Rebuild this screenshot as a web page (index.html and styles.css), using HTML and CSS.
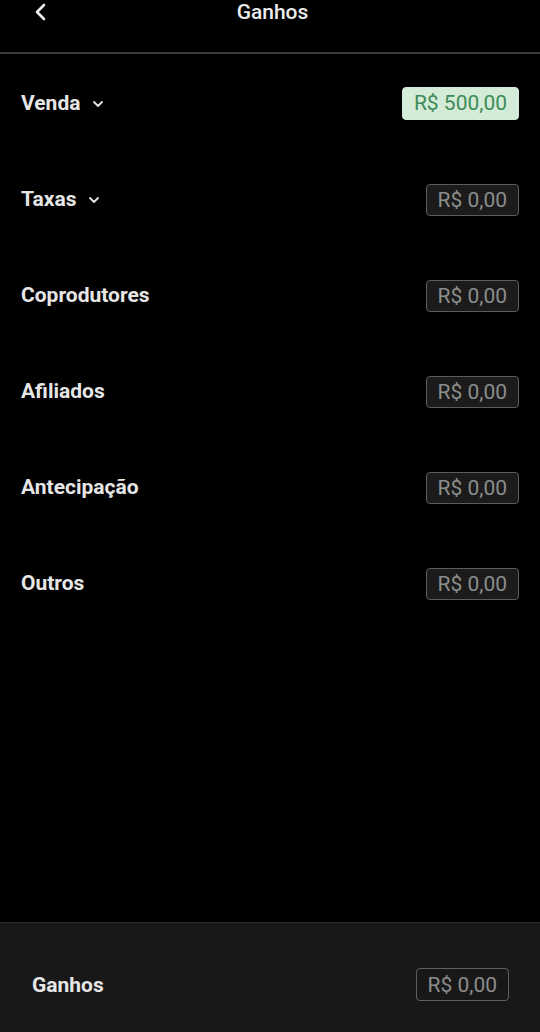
FILE: index.html
```html
<!DOCTYPE html>
<html lang="pt-BR">
<head>
    <meta charset="UTF-8">
    <meta name="viewport" content="width=device-width, initial-scale=1.0">
    <title>Ganhos</title>
    <link rel="stylesheet" href="styles.css">
</head>
<body>
    <div class="screen">
        <header class="topbar">
            <button type="button" class="back">
                <svg width="14" height="18" viewBox="0 0 14 18"><path d="M11 2 L4 9 L11 16" fill="none" stroke="#f0f0f0" stroke-width="2.6" stroke-linecap="round" stroke-linejoin="round"/></svg>
            </button>
            <h1 class="title">Ganhos</h1>
        </header>

        <main class="list">
            <div class="row">
                <span class="label">Venda
                    <svg class="caret" width="12" height="8" viewBox="0 0 12 8"><path d="M2 2 L6 6 L10 2" fill="none" stroke="#e6e6e6" stroke-width="1.8" stroke-linecap="round" stroke-linejoin="round"/></svg>
                </span>
                <span class="value positive">R$ 500,00</span>
            </div>
            <div class="row">
                <span class="label">Taxas
                    <svg class="caret" width="12" height="8" viewBox="0 0 12 8"><path d="M2 2 L6 6 L10 2" fill="none" stroke="#e6e6e6" stroke-width="1.8" stroke-linecap="round" stroke-linejoin="round"/></svg>
                </span>
                <span class="value">R$ 0,00</span>
            </div>
            <div class="row">
                <span class="label">Coprodutores</span>
                <span class="value">R$ 0,00</span>
            </div>
            <div class="row">
                <span class="label">Afiliados</span>
                <span class="value">R$ 0,00</span>
            </div>
            <div class="row">
                <span class="label">Antecipação</span>
                <span class="value">R$ 0,00</span>
            </div>
            <div class="row">
                <span class="label">Outros</span>
                <span class="value">R$ 0,00</span>
            </div>
        </main>

        <footer class="total">
            <span class="label">Ganhos</span>
            <span class="value">R$ 0,00</span>
        </footer>
    </div>
</body>
</html>
```

FILE: styles.css
```css
body{
    margin: 0;
    background: #000;
    font-family: Roboto, "Noto Sans", sans-serif;
    color: #e6e6e6;
}
.screen{
    display: flex;
    flex-direction: column;
    height: 1032px;
}
.topbar{
    height: 52px;
    border-bottom: 2px solid #3a3a3a;
    display: flex;
    justify-content: center;
    position: relative;
}
.back{
    position: absolute;
    left: 33px;
    top: 3px;
    padding: 0;
    border: none;
    background: none;
    display: flex;
}
.title{
    margin: 0 0 0 5px;
    font-size: 21px;
    font-weight: 500;
    line-height: 24px;
    color: #ececec;
}
.list{
    flex: 1;
    padding-top: 1px;
}
.row{
    height: 96px;
    display: flex;
    align-items: center;
    justify-content: space-between;
    padding: 0 21px;
}
.label{
    display: flex;
    align-items: center;
    gap: 12px;
    font-size: 21px;
    font-weight: 700;
    color: #e6e6e6;
}
.caret{
    margin-top: 1px;
}
.value{
    height: 32px;
    box-sizing: border-box;
    display: flex;
    align-items: center;
    padding: 0 11px;
    border: 1px solid #5c5c5c;
    border-radius: 4px;
    background: #1b1b1b;
    color: #8c8c8c;
    font-size: 21px;
    margin-top: 1px;
}
.value.positive{
    height: 33px;
    margin-top: 0;
    background: #d4ecd7;
    border-color: #d4ecd7;
    color: #3d8b57;
}
.total{
    height: 109px;
    border-top: 1px solid #2c2c2c;
    background: #181818;
    display: flex;
    align-items: center;
    justify-content: space-between;
    padding: 0 31px 0 32px;
}
.total .value{
    height: 33px;
    background: #181818;
    border-color: #606060;
    margin-top: 14px;
}
.total .label{
    margin-top: 14px;
}
```
